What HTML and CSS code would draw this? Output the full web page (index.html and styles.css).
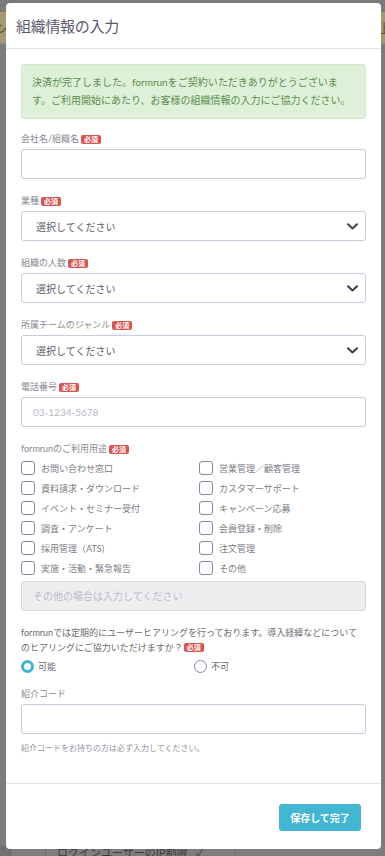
FILE: index.html
```html
<!DOCTYPE html>
<html lang="ja">
<head>
<meta charset="utf-8">
<title>組織情報の入力</title>
<link rel="stylesheet" href="styles.css">
</head>
<body>
<div class="page">
  <div class="page-top"></div>
  <div class="page-band"><span>シ</span><span>上</span></div>
  <div class="page-fill"></div>
  <div class="page-row">
    <span class="cell c1"></span>
    <span class="cell c2">ログインユーザーのIP制限</span>
    <span class="cell c3">✓</span>
    <span class="cell c4"></span>
  </div>
</div>

<div class="modal">
  <div class="modal-header">
    <h2 class="modal-title">組織情報の入力</h2>
  </div>
  <div class="modal-body">
    <div class="alert">決済が完了しました。formrunをご契約いただきありがとうございま<br>す。ご利用開始にあたり、お客様の組織情報の入力にご協力ください。</div>

    <div class="field">
      <div class="label">会社名/組織名<span class="req">必須</span></div>
      <input class="input" type="text">
    </div>

    <div class="field">
      <div class="label">業種<span class="req">必須</span></div>
      <div class="select"><span>選択してください</span><svg class="chev" width="11" height="7" viewBox="0 0 11 7"><path d="M1 1.2l4.5 4.3 4.5-4.3" fill="none" stroke="#3d4148" stroke-width="2" stroke-linecap="round" stroke-linejoin="round"/></svg></div>
    </div>

    <div class="field">
      <div class="label">組織の人数<span class="req">必須</span></div>
      <div class="select"><span>選択してください</span><svg class="chev" width="11" height="7" viewBox="0 0 11 7"><path d="M1 1.2l4.5 4.3 4.5-4.3" fill="none" stroke="#3d4148" stroke-width="2" stroke-linecap="round" stroke-linejoin="round"/></svg></div>
    </div>

    <div class="field">
      <div class="label">所属チームのジャンル<span class="req">必須</span></div>
      <div class="select"><span>選択してください</span><svg class="chev" width="11" height="7" viewBox="0 0 11 7"><path d="M1 1.2l4.5 4.3 4.5-4.3" fill="none" stroke="#3d4148" stroke-width="2" stroke-linecap="round" stroke-linejoin="round"/></svg></div>
    </div>

    <div class="field">
      <div class="label">電話番号<span class="req">必須</span></div>
      <input class="input" type="text" placeholder="03-1234-5678">
    </div>

    <div class="field field-checks">
      <div class="label label-tight">formrunのご利用用途<span class="req">必須</span></div>
      <div class="checks">
        <div class="check"><span class="box"></span>お問い合わせ窓口</div>
        <div class="check"><span class="box"></span>営業管理／顧客管理</div>
        <div class="check"><span class="box"></span>資料請求・ダウンロード</div>
        <div class="check"><span class="box"></span>カスタマーサポート</div>
        <div class="check"><span class="box"></span>イベント・セミナー受付</div>
        <div class="check"><span class="box"></span>キャンペーン応募</div>
        <div class="check"><span class="box"></span>調査・アンケート</div>
        <div class="check"><span class="box"></span>会員登録・削除</div>
        <div class="check"><span class="box"></span>採用管理（ATS)</div>
        <div class="check"><span class="box"></span>注文管理</div>
        <div class="check"><span class="box"></span>実施・活動・緊急報告</div>
        <div class="check"><span class="box"></span>その他</div>
      </div>
      <input class="input input-disabled" type="text" placeholder="その他の場合は入力してください" disabled>
    </div>

    <div class="field field-question">
      <div class="question">formrunでは定期的にユーザーヒアリングを行っております。導入経緯などについてのヒアリングにご協力いただけますか？<span class="req">必須</span></div>
      <div class="radios">
        <div class="radio"><span class="dot dot-on"></span>可能</div>
        <div class="radio"><span class="dot"></span>不可</div>
      </div>
    </div>

    <div class="field field-last">
      <div class="label">紹介コード</div>
      <input class="input" type="text">
      <div class="help">紹介コードをお持ちの方は必ず入力してください。</div>
    </div>
  </div>
  <div class="modal-footer">
    <button class="btn" type="button">保存して完了</button>
  </div>
</div>
</body>
</html>
```

FILE: styles.css
```css
* { box-sizing: border-box; }

html, body {
  margin: 0;
  padding: 0;
}

body {
  width: 385px;
  height: 856px;
  overflow: hidden;
  position: relative;
  background: #7b7b7b;
  font-family: Lato, "Noto Sans CJK JP", sans-serif;
}

/* dimmed page behind the modal */
.page {
  height: 856px;
  display: flex;
  flex-direction: column;
}
.page-top { height: 12px; background: #7a7a7a; }
.page-band {
  height: 31px;
  background: #a39872;
  display: flex;
  justify-content: space-between;
  align-items: center;
  font-size: 13px;
  color: #5a5030;
}
.page-band span:first-child { margin-left: -5px; }
.page-band span:last-child { margin-right: -6px; }
.page-fill {
  flex: 1;
  background: #7c7c7c;
  border-top: 1px solid #8a8a8a;
}
.page-row {
  height: 10px;
  display: flex;
  background: #7d7d7d;
  font-size: 11px;
  line-height: 14px;
  color: #3c3c3c;
}
.cell { height: 10px; overflow: visible; white-space: nowrap; }
.c1 { width: 46px; border-left: 12px solid #707070; border-right: 1px solid #6c6c6c; }
.c2 { width: 140px; padding-left: 11px; }
.c3 { width: 50px; padding-left: 10px; border-right: 1px solid #6e6e6e; }
.c4 { flex: 1; }

/* modal */
.modal {
  position: absolute;
  left: 6px;
  top: 3px;
  width: 375px;
  background: #fff;
  border-radius: 4px;
}

.modal-header {
  height: 46px;
  padding: 0 10px;
  display: flex;
  align-items: center;
  border-bottom: 1px solid #e3e3e8;
}
.modal-title {
  margin: 0;
  font-size: 15px;
  font-weight: 400;
  color: #5d5b70;
  letter-spacing: -0.3px;
}

.modal-body {
  padding: 15px 15px 29px;
}

.alert {
  background: #dff0d8;
  border: 1px solid #d3e8c8;
  border-radius: 3px;
  padding: 8px 10px 9px;
  font-size: 10px;
  line-height: 18px;
  color: #5a8d4b;
  margin-bottom: 13px;
  white-space: nowrap;
}

.field { margin-bottom: 15px; }

.label {
  font-size: 9px;
  line-height: 14px;
  color: #8a8a8f;
  margin-bottom: 3px;
  display: flex;
  align-items: center;
}
.label-tight { margin-bottom: 2px; }

.req {
  display: inline-block;
  background: #d9534f;
  color: #fff;
  font-size: 7px;
  font-weight: 700;
  line-height: 9px;
  height: 9px;
  padding: 0 3px;
  border-radius: 2px;
  margin-left: 2px;
}

.input {
  display: block;
  width: 100%;
  height: 30px;
  border: 1px solid #ccc8de;
  border-radius: 3px;
  background: #fff;
  padding: 0 11px;
  font-family: Lato, "Noto Sans CJK JP", sans-serif;
  font-size: 10px;
  color: #555;
  outline: none;
}
.input::placeholder { color: #b9b7c6; }
.input-disabled {
  background: #eeeef0;
  border-color: #d6d4e2;
  margin-top: 3px;
}
.input-disabled::placeholder { color: #bcbbc7; }

.select {
  height: 30px;
  border: 1px solid #ccc8de;
  border-radius: 3px;
  background: #fff;
  padding: 0 7px 0 14px;
  display: flex;
  align-items: center;
  justify-content: space-between;
  font-size: 10px;
  color: #5c5c64;
}
.chev { display: block; margin-top: 1px; }

.checks {
  display: grid;
  grid-template-columns: 178px 1fr;
}
.check {
  height: 20px;
  display: flex;
  align-items: center;
  font-size: 9px;
  color: #7c7c84;
}
.box {
  width: 14px;
  height: 14px;
  border: 1px solid #8a85a6;
  border-radius: 3px;
  margin-right: 6px;
  flex: none;
}

.field-question { margin-bottom: 12px; }
.question {
  font-size: 9px;
  line-height: 15px;
  color: #6a6a70;
  margin-top: -1px;
}
.question .req { vertical-align: 1px; margin-left: 1px; }

.radios {
  display: grid;
  grid-template-columns: 173px 1fr;
  margin-top: 2px;
}
.radio {
  height: 18px;
  display: flex;
  align-items: center;
  font-size: 9px;
  color: #6a6a70;
}
.dot {
  width: 13px;
  height: 13px;
  border: 1px solid #8a85a6;
  border-radius: 50%;
  margin-right: 4px;
  flex: none;
}
.dot-on {
  border: 3.5px solid #3cb4d3;
}

.field-last { margin-bottom: 0; }
.help {
  margin-top: 8px;
  font-size: 8px;
  line-height: 12px;
  color: #96949f;
}

.modal-footer {
  border-top: 1px solid #e3e3e8;
  padding: 20px 20px 18px;
  display: flex;
  justify-content: flex-end;
}
.btn {
  width: 82px;
  height: 27px;
  border: 0;
  border-radius: 3px;
  background: #42b6d3;
  color: #fff;
  font-family: Lato, "Noto Sans CJK JP", sans-serif;
  font-size: 10px;
  font-weight: 700;
  padding: 0;
}
```
